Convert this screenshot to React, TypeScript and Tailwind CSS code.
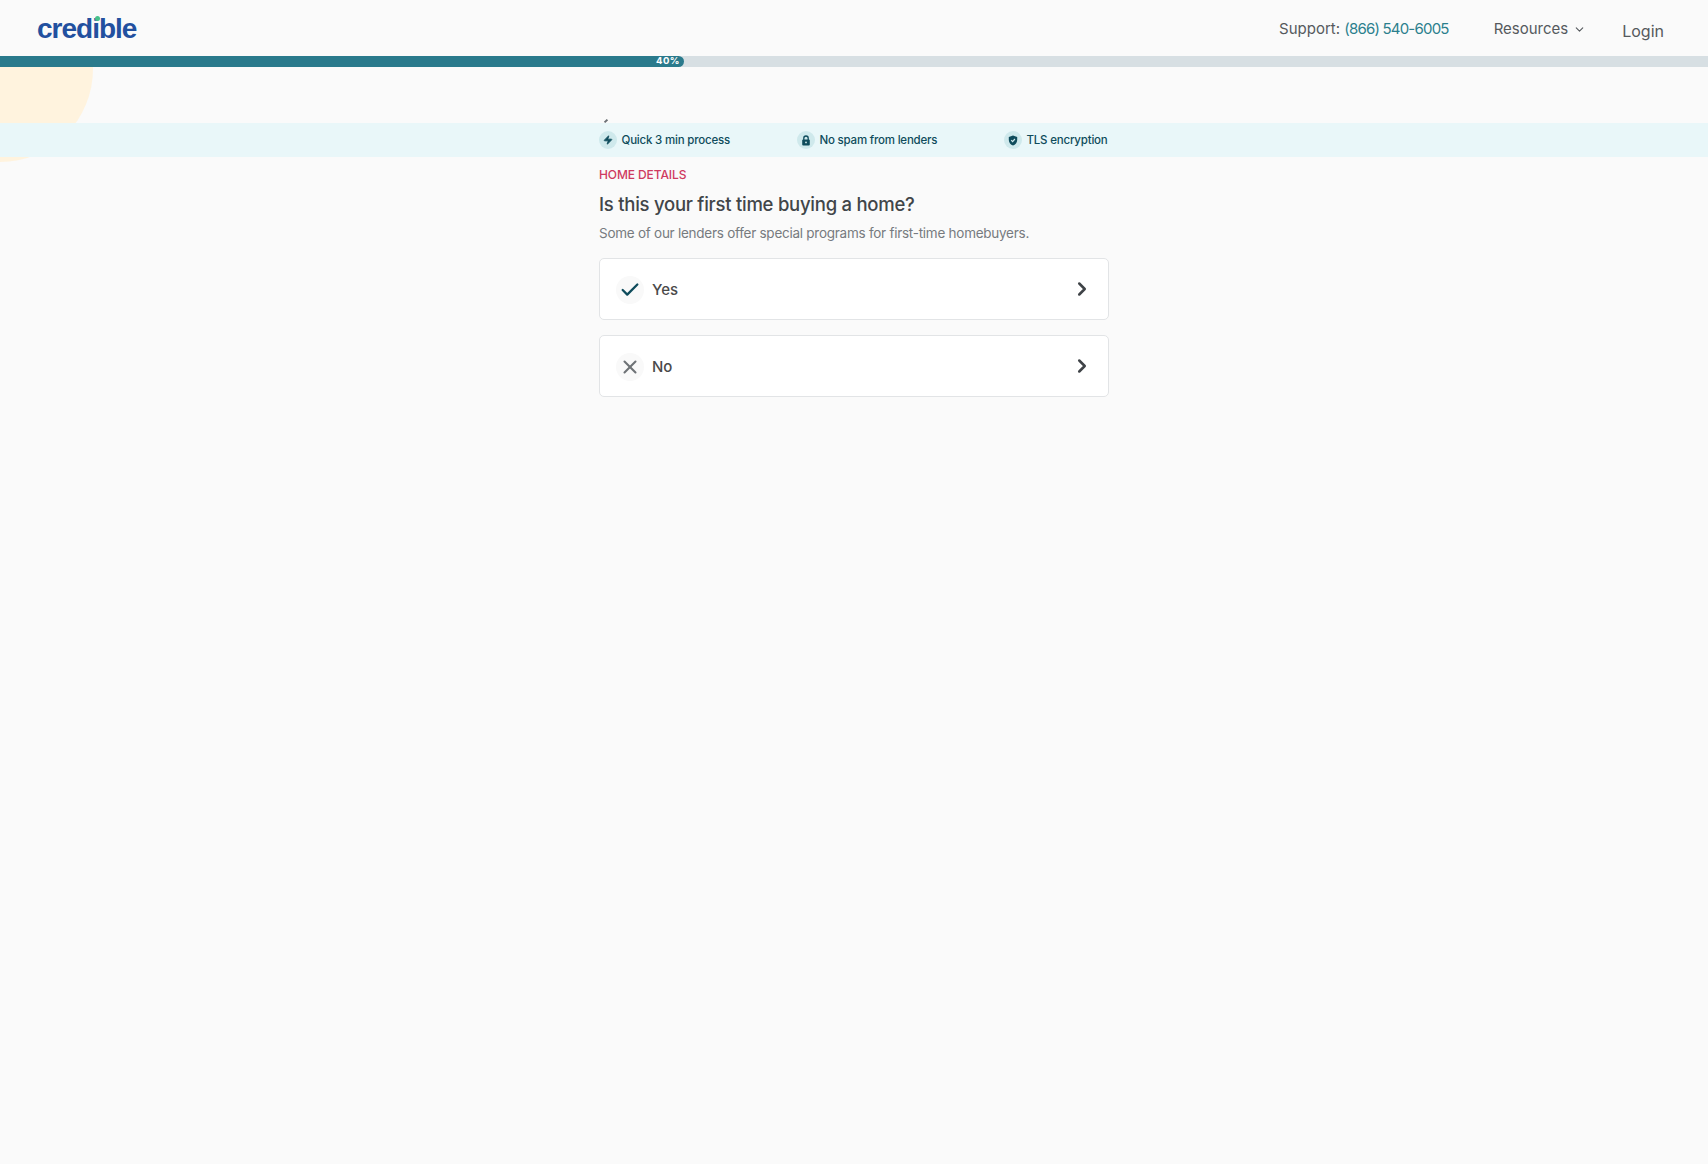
import { Check, ChevronDown, ChevronRight, X, Zap } from "lucide-react";

const font = { fontFamily: "Inter, 'Noto Sans', sans-serif" };

function Badge({ icon, text, w }: { icon: React.ReactNode; text: string; w: string }) {
  return (
    <div className={`flex items-center gap-[4.5px] ${w}`}>
      <span className="flex h-[18px] w-[18px] shrink-0 items-center justify-center rounded-full bg-[#cfe9ec] text-[#0f4c5c]">{icon}</span>
      <span className="mt-[1px] whitespace-nowrap text-[11.5px] font-medium tracking-[-0.2px] text-[#0f4c5c]">{text}</span>
    </div>
  );
}

function Option({ icon, label }: { icon: React.ReactNode; label: string }) {
  return (
    <button className="flex h-[62px] w-full items-center rounded-[5px] border border-[#e2e4e6] bg-white pl-[16px] pr-[15px] pt-[2px] text-left">
      <span className="flex h-[28px] w-[28px] items-center justify-center rounded-full bg-[#f9f9f9]">{icon}</span>
      <span className="ml-[8px] flex-1 text-[15px] font-medium text-[#4a4a4a]">{label}</span>
      <ChevronRight size={22} strokeWidth={2.75} className="mt-[-2px] text-[#3f4347]" />
    </button>
  );
}

export default function App() {
  return (
    <div className="relative min-h-[1164px] overflow-hidden bg-[#fafafa]" style={font}>
      <header className="flex h-14 items-center justify-between pl-[37px] pr-[44px]">
        <div className="relative mt-[1px] text-[28px] font-bold leading-none tracking-[-1px] text-[#22509f]" style={{ fontFamily: "'Liberation Sans', sans-serif" }}>
          credible
          <span className="absolute left-[58px] top-[1px] h-[5px] w-[5px] rounded-full bg-[#45c08a]" />
        </div>
        <nav className="mt-[3px] flex items-center text-[15px] text-[#55595d]">
          <span>Support: <span className="tracking-[-0.8px] text-[#2b7f8d]">(866) 540-6005</span></span>
          <span className="ml-[45px] flex items-center gap-[5px]">Resources <ChevronDown size={13} /></span>
          <span className="ml-[36px] mt-[2px] text-[16px]">Login</span>
        </nav>
      </header>

      <div className="relative z-10 h-[11px] bg-[#d7dfe3]">
        <div className="flex h-full w-[684px] items-center justify-end rounded-r-full bg-[#2a7a8c] pr-[4px]">
          <span className="text-[9.5px] font-bold tracking-[0.5px] text-white">40%</span>
        </div>
      </div>

      <div className="relative">
        <div className="absolute left-0 top-0 h-[100px] w-[100px] overflow-hidden">
          <div className="absolute left-[-93px] top-[-91px] h-[186px] w-[186px] rounded-full bg-[#fff3de]" />
        </div>
        <div className="h-[56px]" />
        <div className="relative h-[34px] bg-[#e9f7f9]">
          <div className="absolute left-[605px] top-[-4px] h-[4px] w-[2px] rotate-45 bg-[#6b7075]" />
          <div className="mx-auto flex h-full w-[510px] items-center">
            <Badge w="w-[198px]" text="Quick 3 min process" icon={<Zap size={10} fill="currentColor" />} />
            <Badge w="w-[207px]" text="No spam from lenders" icon={
              <svg width="10" height="11" viewBox="0 0 10 11" fill="none">
                <path d="M2.8 5V3.2a2.2 2.2 0 0 1 4.4 0V5" stroke="currentColor" strokeWidth="1.3" />
                <rect x="1.2" y="4.6" width="7.6" height="5.8" rx="1" fill="currentColor" />
                <circle cx="5" cy="7.4" r="0.9" fill="#cfe9ec" />
              </svg>
            } />
            <Badge w="" text="TLS encryption" icon={
              <svg width="10" height="11" viewBox="0 0 10 11">
                <path d="M5 0.4 9.2 1.9V5c0 2.7-1.8 4.6-4.2 5.6C2.6 9.6.8 7.7.8 5V1.9Z" fill="currentColor" />
                <path d="M3.2 5.2 4.6 6.6 6.9 4" stroke="#cfe9ec" strokeWidth="1.2" fill="none" />
              </svg>
            } />
          </div>
        </div>
        <main className="relative mx-auto w-[510px] pt-[10px]">
          <div className="text-[12px] font-medium leading-4 tracking-[-0.1px] text-[#cf3a5f]">HOME DETAILS</div>
          <h1 className="mt-[9px] text-[18.5px] font-medium leading-6 tracking-[-0.25px] text-[#414549]">Is this your first time buying a home?</h1>
          <p className="mt-[7px] text-[13.5px] leading-5 tracking-[-0.26px] text-[#777b7f]">Some of our lenders offer special programs for first-time homebuyers.</p>
          <div className="mt-[15px] flex flex-col gap-[15px]">
            <Option label="Yes" icon={<Check size={22} strokeWidth={2.5} className="text-[#0f4c5c]" />} />
            <Option label="No" icon={<X size={22} strokeWidth={2.25} className="text-[#6e7276]" />} />
          </div>
        </main>
      </div>
    </div>
  );
}
